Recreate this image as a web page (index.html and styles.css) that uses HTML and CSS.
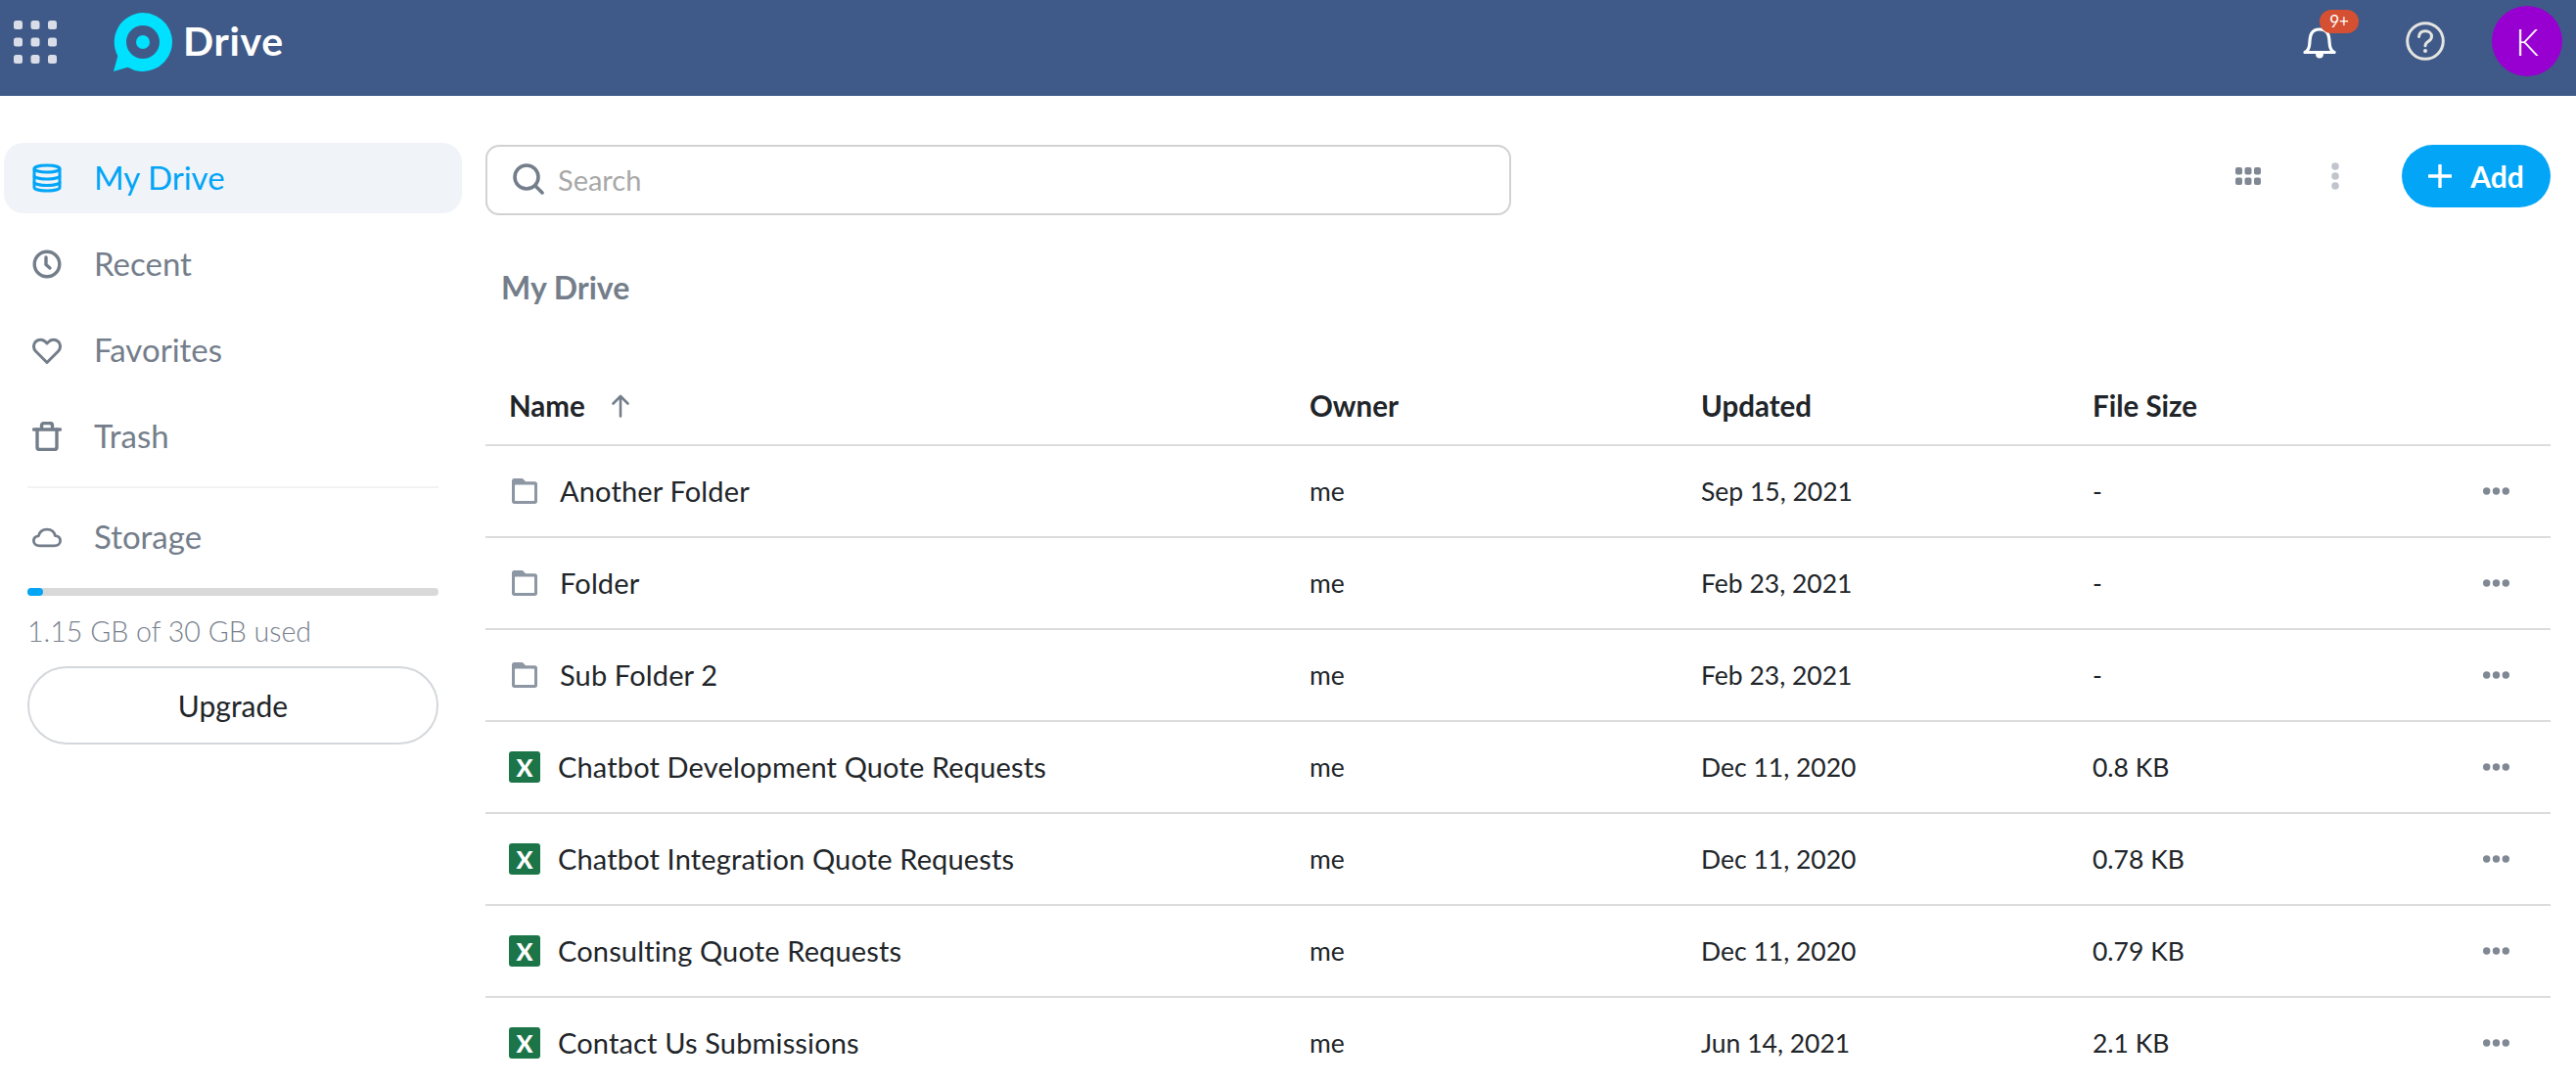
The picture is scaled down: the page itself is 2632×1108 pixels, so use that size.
FILE: index.html
```html
<!DOCTYPE html>
<html lang="en">
<head>
<meta charset="utf-8">
<title>Drive</title>
<link rel="stylesheet" href="styles.css">
</head>
<body>
<svg class="defs" width="0" height="0" aria-hidden="true">
  <symbol id="folder" viewBox="0 0 26 26"><path d="M0 2.500C0 1 1 0 2.500 0h7c1.200 0 2 .4 2.700 1.200L14 3.200h9.500c1.500 0 2.500 1 2.500 2.500v17.800c0 1.500-1 2.500-2.500 2.500h-21C1 26 0 25 0 23.500z" fill="#8d96a3"/><rect x="3" y="6.400" width="20" height="16.600" rx=".6" fill="#fff"/></symbol>
  <symbol id="dots" viewBox="0 0 27 8"><circle cx="3.700" cy="4" r="3.700"/><circle cx="13.500" cy="4" r="3.700"/><circle cx="23.300" cy="4" r="3.700"/></symbol>
</svg>
<header class="topbar">
  <svg class="apps" viewBox="0 0 44 44" aria-hidden="true">
    <g fill="#d9dde7"><rect x="0" y="0" width="9" height="9" rx="2.500"/><rect x="17.500" y="0" width="9" height="9" rx="2.500"/><rect x="35" y="0" width="9" height="9" rx="2.500"/><rect x="0" y="17.500" width="9" height="9" rx="2.500"/><rect x="17.500" y="17.500" width="9" height="9" rx="2.500"/><rect x="35" y="17.500" width="9" height="9" rx="2.500"/><rect x="0" y="35" width="9" height="9" rx="2.500"/><rect x="17.500" y="35" width="9" height="9" rx="2.500"/><rect x="35" y="35" width="9" height="9" rx="2.500"/></g>
  </svg>
  <svg class="logo" viewBox="0 0 60 60" aria-hidden="true">
    <path d="M30 0a30 30 0 1 1-15.500 55.700L0 60l4.300-15.800A30 30 0 0 1 30 0z" fill="#00e0ff"/>
    <circle cx="30" cy="30" r="17" fill="#3f5a88"/>
    <circle cx="30" cy="30" r="7" fill="#00e0ff"/>
  </svg>
  <span class="brand">Drive</span>
  <div class="top-actions">
    <div class="bell">
      <svg class="bell-icon" viewBox="0 0 34 38" aria-hidden="true">
        <path d="M2 30.500c3.500-1.500 4.500-4 4.800-9 .4-7.500 1-14.500 10.200-14.500s9.800 7 10.200 14.500c.3 5 1.300 7.500 4.800 9z" fill="none" stroke="#fff" stroke-width="3.200" stroke-linejoin="round"/>
        <path d="M13 32h8c0 3-1.500 4.500-4 4.500s-4-1.500-4-4.500z" fill="#fff"/>
      </svg>
      <span class="badge">9+</span>
    </div>
    <svg class="help" viewBox="0 0 40 40" aria-hidden="true">
      <circle cx="20" cy="20" r="18.300" fill="none" stroke="#e4e4e0" stroke-width="3"/>
      <path d="M13.500 15.500c.4-3.700 3-5.700 6.500-5.700 3.800 0 6.500 2.300 6.500 5.500 0 2.500-1.400 3.800-3.300 5-1.800 1.100-3.200 2.100-3.200 4.500" fill="none" stroke="#e4e4e0" stroke-width="3" stroke-linecap="round"/>
      <circle cx="20" cy="30" r="2" fill="#e4e4e0"/>
    </svg>
    <div class="avatar">K</div>
  </div>
</header>
<div class="layout">
  <aside class="sidebar">
    <a class="nav-item active">
      <svg class="nav-icon" viewBox="0 0 30 30" aria-hidden="true"><g fill="none" stroke="#03a5f7" stroke-width="3"><ellipse cx="15" cy="5.500" rx="13" ry="3.500"/><path d="M2 5.500v19c0 2 6 3.500 13 3.500s13-1.500 13-3.500v-19"/><path d="M2 12.500c0 2 6 3.500 13 3.500s13-1.500 13-3.500"/><path d="M2 19c0 2 6 3.500 13 3.500S28 21 28 19"/></g></svg>
      <span>My Drive</span>
    </a>
    <a class="nav-item">
      <svg class="nav-icon" viewBox="0 0 30 30" aria-hidden="true"><g fill="none" stroke="#747e8b" stroke-width="3.400" stroke-linecap="round"><circle cx="15" cy="15" r="12.800"/><path d="M14 8v7.500l4 3.500"/></g></svg>
      <span>Recent</span>
    </a>
    <a class="nav-item">
      <svg class="nav-icon" viewBox="0 0 30 30" aria-hidden="true"><path d="M15 27.500 3.500 16C.8 13.200.8 8.800 3.500 6.200c2.700-2.600 7-2.600 9.700 0L15 8l1.800-1.800c2.700-2.600 7-2.600 9.700 0 2.700 2.600 2.700 7 0 9.800z" fill="none" stroke="#747e8b" stroke-width="3" stroke-linejoin="round"/></svg>
      <span>Favorites</span>
    </a>
    <a class="nav-item">
      <svg class="nav-icon" viewBox="0 0 30 30" aria-hidden="true"><g fill="none" stroke="#747e8b" stroke-width="3.400" stroke-linejoin="round" stroke-linecap="round"><path d="M1.500 8h27"/><path d="M9.500 7V4c0-1.500 1-2.500 2.500-2.500h6c1.500 0 2.500 1 2.500 2.500v3"/><path d="M5 8v18c0 1.500 1 2.500 2.500 2.500h15c1.500 0 2.500-1 2.500-2.500V8"/></g></svg>
      <span>Trash</span>
    </a>
    <hr class="side-rule">
    <div class="nav-item storage">
      <svg class="nav-icon" viewBox="0 0 32 30" aria-hidden="true"><path d="M8 24.500c-3.800 0-6.500-2.200-6.500-5.500 0-3 2.200-5 5.200-5.300C7.800 9.400 11.400 6.500 16 6.500c4.500 0 8 2.800 9 7 3.300.3 5.500 2.400 5.500 5.500 0 3.300-2.700 5.500-6.500 5.500z" fill="none" stroke="#747e8b" stroke-width="3" stroke-linejoin="round"/></svg>
      <span>Storage</span>
    </div>
    <div class="quota"><div class="quota-fill"></div></div>
    <p class="quota-text">1.15 GB of 30 GB used</p>
    <button class="upgrade">Upgrade</button>
  </aside>
  <main class="content">
    <div class="toolbar">
      <div class="search">
        <svg class="search-icon" viewBox="0 0 32 32" aria-hidden="true"><g fill="none" stroke="#747e8b" stroke-width="3.600" stroke-linecap="round"><circle cx="14" cy="14" r="12"/><path d="M23 23l7 7"/></g></svg>
        <span>Search</span>
      </div>
      <div class="tools">
        <svg class="view-grid" viewBox="0 0 26 18" aria-hidden="true"><g fill="#808894"><rect x="0" y="0" width="7" height="7.500" rx="2"/><rect x="9.500" y="0" width="7" height="7.500" rx="2"/><rect x="19" y="0" width="7" height="7.500" rx="2"/><rect x="0" y="10.500" width="7" height="7.500" rx="2"/><rect x="9.500" y="10.500" width="7" height="7.500" rx="2"/><rect x="19" y="10.500" width="7" height="7.500" rx="2"/></g></svg>
        <svg class="kebab" viewBox="0 0 8 28" aria-hidden="true"><g fill="#c0c4cc"><circle cx="4" cy="4" r="3.800"/><circle cx="4" cy="14" r="3.800"/><circle cx="4" cy="24" r="3.800"/></g></svg>
        <button class="add">
          <svg class="plus" viewBox="0 0 24 24" aria-hidden="true"><path d="M12 1v22M1 12h22" stroke="#fff" stroke-width="3.400" stroke-linecap="round"/></svg>
          <span>Add</span>
        </button>
      </div>
    </div>
    <h1 class="title">My Drive</h1>
    <div class="table">
      <div class="row head">
        <div class="cell name">Name
          <svg class="sort" viewBox="0 0 20 24" aria-hidden="true"><path d="M10 22.500V2M2.500 9.500 10 2l7.500 7.500" fill="none" stroke="#747e8b" stroke-width="2.600" stroke-linecap="round" stroke-linejoin="round"/></svg>
        </div>
        <div class="cell">Owner</div><div class="cell">Updated</div><div class="cell">File Size</div><div class="cell"></div>
      </div>
      <div class="row">
        <div class="cell name"><svg class="ficon"><use href="#folder"/></svg><span class="fname">Another Folder</span></div>
        <div class="cell">me</div><div class="cell">Sep 15, 2021</div><div class="cell">-</div>
        <div class="cell more"><svg class="dots"><use href="#dots"/></svg></div>
      </div>
      <div class="row">
        <div class="cell name"><svg class="ficon"><use href="#folder"/></svg><span class="fname">Folder</span></div>
        <div class="cell">me</div><div class="cell">Feb 23, 2021</div><div class="cell">-</div>
        <div class="cell more"><svg class="dots"><use href="#dots"/></svg></div>
      </div>
      <div class="row">
        <div class="cell name"><svg class="ficon"><use href="#folder"/></svg><span class="fname">Sub Folder 2</span></div>
        <div class="cell">me</div><div class="cell">Feb 23, 2021</div><div class="cell">-</div>
        <div class="cell more"><svg class="dots"><use href="#dots"/></svg></div>
      </div>
      <div class="row">
        <div class="cell name"><span class="xl">X</span><span class="fname">Chatbot Development Quote Requests</span></div>
        <div class="cell">me</div><div class="cell">Dec 11, 2020</div><div class="cell">0.8 KB</div>
        <div class="cell more"><svg class="dots"><use href="#dots"/></svg></div>
      </div>
      <div class="row">
        <div class="cell name"><span class="xl">X</span><span class="fname">Chatbot Integration Quote Requests</span></div>
        <div class="cell">me</div><div class="cell">Dec 11, 2020</div><div class="cell">0.78 KB</div>
        <div class="cell more"><svg class="dots"><use href="#dots"/></svg></div>
      </div>
      <div class="row">
        <div class="cell name"><span class="xl">X</span><span class="fname">Consulting Quote Requests</span></div>
        <div class="cell">me</div><div class="cell">Dec 11, 2020</div><div class="cell">0.79 KB</div>
        <div class="cell more"><svg class="dots"><use href="#dots"/></svg></div>
      </div>
      <div class="row">
        <div class="cell name"><span class="xl">X</span><span class="fname">Contact Us Submissions</span></div>
        <div class="cell">me</div><div class="cell">Jun 14, 2021</div><div class="cell">2.1 KB</div>
        <div class="cell more"><svg class="dots"><use href="#dots"/></svg></div>
      </div>
    </div>
  </main>
</div>
</body>
</html>
```
FILE: styles.css
```css
* { box-sizing: border-box; }
html, body { margin: 0; height: 100%; overflow: hidden; background: #fff; }
body { font-family: Lato, "Noto Sans", sans-serif; color: #212529; }
.defs { display: block; height: 0; }

.topbar { height: 98px; background: #3f5a88; display: flex; align-items: center; padding: 0 14px 0 14px; }
.apps { width: 44px; height: 44px; margin-top: -12px; flex: none; }
.logo { width: 60px; height: 60px; margin: 0 0 0 58px; flex: none; position: relative; top: -6px; }
.brand { margin-left: 11px; font-size: 41px; font-weight: 700; color: #fff; margin-top: -15px; letter-spacing: .7px; }
.top-actions { margin-left: auto; display: flex; align-items: center; margin-top: -14px; }
.bell { position: relative; width: 34px; height: 38px; margin-right: 71px; }
.bell-icon { width: 34px; height: 38px; display: block; }
.badge { position: absolute; left: 17px; top: -13px; width: 40px; height: 24px; border-radius: 12px; background: #d55032; color: #fff; font-size: 17px; line-height: 24px; text-align: center; }
.help { width: 40px; height: 40px; margin-right: 48px; }
.avatar { width: 72px; height: 72px; border-radius: 50%; background: #9700d1; color: #fff; font-size: 37px; font-weight: 300; display: flex; align-items: center; justify-content: center; }

.layout { display: flex; }
.sidebar { width: 496px; flex: none; padding: 48px 24px 0 4px; }
.nav-item { height: 72px; margin-bottom: 16px; display: flex; align-items: center; padding-left: 29px; border-radius: 20px; font-size: 33px; color: #747e8b; line-height: 40px; }
.nav-item span { position: relative; top: -1px; }
.nav-item.active { background: #f0f4f8; color: #03a5f7; }
.nav-icon { width: 30px; height: 30px; margin-right: 33px; flex: none; }
.side-rule { margin: -1px 0 0 24px; width: 420px; border: 0; border-top: 2px solid #f2f2f2; }
.storage { margin: 14px 0 0; height: 72px; }
.quota { margin: 16px 0 0 24px; width: 420px; height: 8px; border-radius: 4px; background: #d9d9d9; }
.quota-fill { width: 16px; height: 8px; border-radius: 4px; background: #03a5f7; }
.quota-text { margin: 20px 0 0 24px; font-size: 28.6px; line-height: 32px; color: #78818d; font-weight: 300; }
.upgrade { display: block; margin: 20px 0 0 24px; width: 420px; height: 80px; border-radius: 40px; border: 2px solid #d4d7db; background: #fff; font: inherit; font-size: 30px; color: #212529; }

.content { flex: 1; min-width: 0; padding: 50px 26px 0 0; }
.toolbar { display: flex; align-items: flex-start; justify-content: space-between; }
.search { width: 1048px; height: 72px; border: 2px solid #d2d2d2; border-radius: 14px; display: flex; align-items: center; padding-left: 26px; padding-bottom: 2px; color: #a8a8a8; font-size: 29px; }
.search-icon { width: 32px; height: 32px; margin-right: 14px; flex: none; }
.tools { display: flex; align-items: center; height: 64px; }
.view-grid { width: 26px; height: 18px; }
.kebab { width: 8px; height: 28px; margin-left: 72px; }
.add { margin-left: 64px; width: 152px; height: 64px; border: 0; border-radius: 32px; background: #03a5f7; color: #fff; font: inherit; font-size: 30px; font-weight: 700; display: flex; align-items: center; justify-content: center; gap: 19px; }
.plus { width: 24px; height: 24px; }
.title { margin: 54px 0 0 16px; font-size: 32px; line-height: 40px; font-weight: 700; color: #747e8b; }
.table { margin-top: 65px; }
.row { display: grid; grid-template-columns: 842px 400px 400px 1fr 112px; height: 94px; align-items: center; border-bottom: 2px solid #dcdcdc; font-size: 26.5px; color: #212529; }
.row.head { height: 77px; font-size: 29.5px; font-weight: 700; align-items: start; padding-top: 18px; }
.cell { display: flex; align-items: center; }
.name { padding-left: 24px; }
.fname { font-size: 29px; letter-spacing: .15px; margin-left: 24px; position: relative; top: -1px; }
.sort { width: 20px; height: 24px; margin-left: 26px; }
.ficon { width: 26px; height: 26px; margin-left: 3px; flex: none; }
.ficon + .fname { margin-left: 23px; }
.xl { width: 32px; height: 32px; border-radius: 3px; background: #1b7549; color: #fff; font-weight: 900; font-size: 25px; display: flex; align-items: center; justify-content: center; flex: none; }
.xl + .fname { margin-left: 18px; }
.more { justify-content: flex-end; padding-right: 42px; }
.dots { width: 27px; height: 8px; fill: #808894; }
```
